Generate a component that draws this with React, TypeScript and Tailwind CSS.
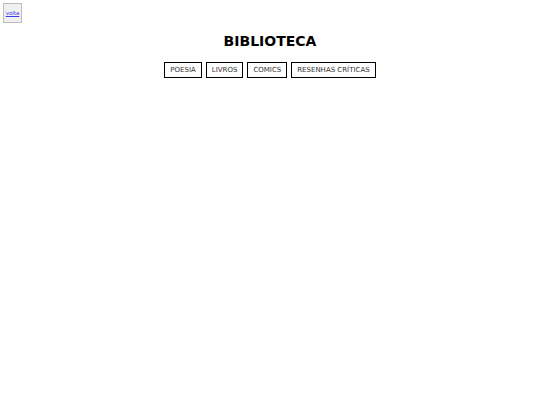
export default function App() {
  const cats = ["POESIA", "LIVROS", "COMICS", "RESENHAS CRÍTICAS"];
  return (
    <div className="min-h-[405px] bg-white font-['DejaVu_Sans',sans-serif] text-black">
      <div className="p-[3px]">
        <button className="w-[19px] h-[20px] flex items-center justify-center bg-[#f0f0f0] border border-[#bdbdbd]">
          <a href="#" className="text-[5.5px] text-[#3a3aee] underline">volta</a>
        </button>
      </div>
      <h1 className="mt-[5px] text-center text-[14px] font-bold leading-[20px]">BIBLIOTECA</h1>
      <div className="mt-[11px] flex justify-center gap-[4px]">
        {cats.map((c) => (
          <button key={c} className="h-[16px] px-[5px] border border-black bg-white text-[7px] leading-none text-[#333]">
            {c}
          </button>
        ))}
      </div>
    </div>
  );
}
